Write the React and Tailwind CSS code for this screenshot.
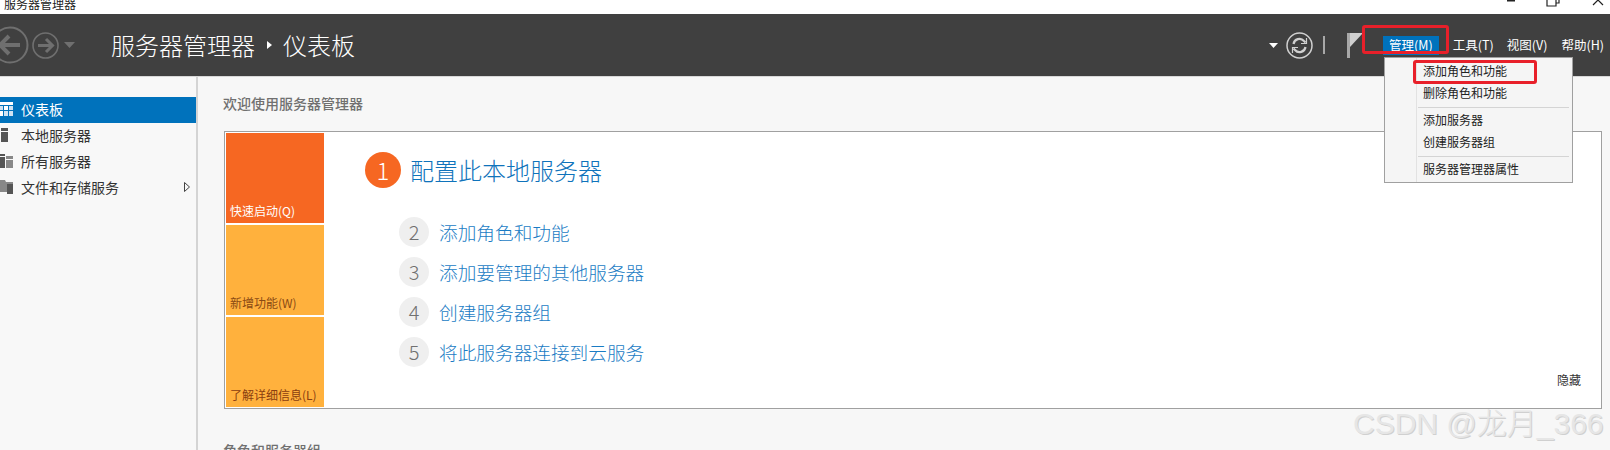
import React from "react";

const cjk = "font-['Noto_Sans_CJK_SC','Noto_Sans',sans-serif]";

const navItems = [
  { label: "仪表板", icon: "grid", active: true },
  { label: "本地服务器", icon: "server" },
  { label: "所有服务器", icon: "servers" },
  { label: "文件和存储服务", icon: "files", arrow: true },
];

const steps = [
  { n: 2, text: "添加角色和功能" },
  { n: 3, text: "添加要管理的其他服务器" },
  { n: 4, text: "创建服务器组" },
  { n: 5, text: "将此服务器连接到云服务" },
];

const NavIcon = ({ type }) => {
  if (type === "grid") {
    return (
      <svg width="13" height="14" viewBox="0 0 13 14">
        <rect x="0" y="0" width="13" height="3" fill="#fff" />
        <rect x="0" y="4" width="3" height="4" fill="#cfe3f3" />
        <rect x="4" y="4" width="4" height="4" fill="#fff" />
        <rect x="9" y="4" width="4" height="4" fill="#cfe3f3" />
        <rect x="0" y="9" width="3" height="5" fill="#fff" />
        <rect x="4" y="9" width="4" height="5" fill="#cfe3f3" />
        <rect x="9" y="9" width="4" height="5" fill="#cfe3f3" />
      </svg>
    );
  }
  if (type === "server") {
    return (
      <svg width="13" height="14" viewBox="0 0 13 14">
        <rect x="1" y="0" width="7" height="3" fill="#555" />
        <rect x="1" y="4" width="7" height="10" fill="#555" />
      </svg>
    );
  }
  if (type === "servers") {
    return (
      <svg width="13" height="14" viewBox="0 0 13 14">
        <rect x="0" y="0" width="5" height="2" fill="#555" />
        <rect x="0" y="3" width="5" height="11" fill="#555" />
        <rect x="6" y="2" width="7" height="3" fill="#888" />
        <rect x="6" y="6" width="7" height="8" fill="#888" />
      </svg>
    );
  }
  return (
    <svg width="13" height="14" viewBox="0 0 13 14">
      <path d="M0 0h5l1 2h7v4H7v6H0z" fill="#888" />
      <rect x="7" y="4" width="6" height="10" fill="#555" />
    </svg>
  );
};

const Tile = ({ label, className }) => (
  <div className={`w-[98px] flex items-end pl-[4px] pb-[3px] text-[12px] leading-[18px] ${className}`}>
    {label}
  </div>
);

const MenuItem = ({ children }) => (
  <div className="h-[22px] flex items-center pl-[38px] text-[12px] leading-[20px] pb-[2px] text-[#222]">{children}</div>
);

const MenuSep = () => <div className="ml-[33px] mr-[3px] my-[2px] h-[1px] bg-[#d4d4d4]" />;

export default function App() {
  return (
    <div className={`relative w-[1610px] h-[450px] overflow-hidden bg-[#f7f7f7] ${cjk}`}>
      {/* title bar */}
      <div className="h-[14px] bg-white overflow-hidden flex items-start">
        <span className="ml-[4px] -mt-[5px] text-[12px] leading-[18px] text-[#222]">服务器管理器</span>
        <svg className="ml-auto mr-[4px]" width="104" height="14" viewBox="0 0 104 14">
          <rect x="5" y="0" width="8" height="1.500" fill="#222" />
          <path d="M45 0v6h9V0M54 3h3V0" fill="none" stroke="#222" strokeWidth="1.200" />
          <path d="M91 5L96 0M96 0L101 5" fill="none" stroke="#222" strokeWidth="1.200" />
        </svg>
      </div>

      {/* header */}
      <div className="h-[62px] bg-[#404040] flex items-center border-b border-[#d8d8d8] box-content">
        <svg className="-ml-[9px] shrink-0" width="38" height="38" viewBox="0 0 38 38">
          <circle cx="19" cy="19" r="17.500" fill="none" stroke="#6f6f6f" strokeWidth="2" />
          <path d="M29 19H10M18 10l-9 9 9 9" fill="none" stroke="#6f6f6f" strokeWidth="4" />
        </svg>
        <svg className="ml-[3px] shrink-0" width="27" height="27" viewBox="0 0 27 27">
          <circle cx="13.500" cy="13.500" r="12.500" fill="none" stroke="#6f6f6f" strokeWidth="1.600" />
          <path d="M6 13.500h14M14 7l6.500 6.500L14 20" fill="none" stroke="#6f6f6f" strokeWidth="3" />
        </svg>
        <svg className="ml-[5px] shrink-0" width="11" height="6" viewBox="0 0 11 6">
          <path d="M0 0h11L5.500 6z" fill="#6f6f6f" />
        </svg>
        <div className="ml-[36px] flex items-center text-[24px] font-light text-white leading-none">
          <span>服务器管理器</span>
          <svg className="mx-[10px]" width="8" height="10" viewBox="0 0 8 10">
            <path d="M2 1l5 4-5 4z" fill="#fff" />
          </svg>
          <span>仪表板</span>
        </div>

        <div className="ml-auto flex items-center">
          <svg width="9" height="5" viewBox="0 0 9 5">
            <path d="M0 0h9L4.500 5z" fill="#fff" />
          </svg>
          <svg className="ml-[8px]" width="27" height="27" viewBox="0 0 27 27">
            <circle cx="13.500" cy="13.500" r="12.500" fill="none" stroke="#d0d0d0" strokeWidth="1.500" />
            <path d="M7.500 12a6 6 0 0 1 10.500-3l1.500 1.500M19.500 15a6 6 0 0 1-10.500 3l-1.500-1.500" fill="none" stroke="#d0d0d0" strokeWidth="2.200" />
            <path d="M20.500 6v5.500H15M6.500 21v-5.500H12" fill="none" stroke="#d0d0d0" strokeWidth="1.200" />
          </svg>
          <div className="ml-[10px] w-[2px] h-[18px] bg-[#a8a8a8]" />
          <svg className="ml-[22px]" width="16" height="25" viewBox="0 0 16 25">
            <rect x="0" y="0" width="3" height="25" fill="#a8a8a8" />
            <path d="M3 0h13L3 14z" fill="#cfcfcf" />
          </svg>
          <div className="ml-[20px] flex items-center text-[12.500px] text-white h-[19px]">
            <span className="w-[56px] h-[19px] bg-[#0072bc] flex items-center justify-center">管理(M)</span>
            <span className="ml-[14px]">工具(T)</span>
            <span className="ml-[13px]">视图(V)</span>
            <span className="ml-[14px] mr-[6px]">帮助(H)</span>
          </div>
        </div>
      </div>

      {/* body */}
      <div className="flex h-[373px]">
        <aside className="w-[198px] shrink-0 bg-[#f8f8f8] border-r-2 border-[#d4d4d4] pt-[20px]">
          {navItems.map((item) => (
            <div
              key={item.label}
              className={`h-[26px] flex items-center text-[14px] leading-[24px] pb-[2px] ${item.active ? "bg-[#0072bc] text-white" : "text-[#333]"}`}
            >
              <span className="w-[21px] flex shrink-0">
                <NavIcon type={item.icon} />
              </span>
              <span>{item.label}</span>
              {item.arrow && (
                <svg className="ml-auto mr-[6px]" width="6" height="10" viewBox="0 0 6 10">
                  <path d="M0.500 0.500L5.500 5L0.500 9.500z" fill="none" stroke="#444" />
                </svg>
              )}
            </div>
          ))}
        </aside>

        <main className="flex-1 pl-[26px] pr-[8px] pt-[16px]">
          <h2 className="-ml-[1px] h-[20px] text-[14px] leading-[20px] font-medium text-[#707070]">欢迎使用服务器管理器</h2>
          <div className="mt-[18px] h-[278px] bg-white border border-[#a0a0a0] p-[1px] flex relative">
            <div className="flex flex-col gap-[2px]">
              <Tile label="快速启动(Q)" className="h-[90px] bg-[#f66722] text-white" />
              <Tile label="新增功能(W)" className="h-[90px] bg-[#ffb13d] text-[#8a4a14]" />
              <Tile label="了解详细信息(L)" className="h-[90px] bg-[#ffb13d] text-[#8a3e10]" />
            </div>
            <div className="pl-[41px] pt-[19px]">
              <div className="flex items-center h-[36px]">
                <span className="w-[36px] h-[36px] rounded-full bg-[#f66722] text-white text-[24px] font-light flex items-center justify-center">1</span>
                <span className="ml-[9px] text-[24px] font-light text-[#0f73bb]">配置此本地服务器</span>
              </div>
              <div className="mt-[29px] ml-[34px] flex flex-col gap-[10px]">
                {steps.map((step) => (
                  <div key={step.n} className="flex items-center h-[30px]">
                    <span className="w-[30px] h-[30px] rounded-full bg-[#efefef] text-[#707070] text-[20px] font-light flex items-center justify-center">{step.n}</span>
                    <span className="ml-[10px] text-[18.670px] font-light text-[#1a7cc4]">{step.text}</span>
                  </div>
                ))}
              </div>
            </div>
            <span className="absolute right-[20px] bottom-[19px] text-[12px] text-[#333]">隐藏</span>
          </div>
          <h2 className="-ml-[1px] mt-[31px] text-[14px] leading-[20px] font-medium text-[#707070]">角色和服务器组</h2>
        </main>
      </div>

      {/* dropdown menu */}
      <div className="absolute left-[1384px] top-[57px] w-[189px] h-[126px] bg-[#f5f5f5] border border-[#a0a0a0] pt-[3px]">
        <div className="absolute left-[31px] top-0 bottom-0 w-[1px] bg-[#e2e2e2]" />
        <MenuItem>添加角色和功能</MenuItem>
        <MenuItem>删除角色和功能</MenuItem>
        <MenuSep />
        <MenuItem>添加服务器</MenuItem>
        <MenuItem>创建服务器组</MenuItem>
        <MenuSep />
        <MenuItem>服务器管理器属性</MenuItem>
      </div>

      {/* red annotation boxes */}
      <div className="absolute left-[1362px] top-[25px] w-[87px] h-[29px] border-[3px] border-[#e8202a] rounded-[3px]" />
      <div className="absolute left-[1413px] top-[60px] w-[124px] h-[24px] border-[3px] border-[#e8202a] rounded-[3px]" />

      {/* watermark */}
      <div className="absolute left-[1353px] top-[404px] text-[30px] font-light leading-[40px] whitespace-nowrap text-[#e6e6e6] [text-shadow:1px_1px_0px_#d0d0d0] font-['Liberation_Sans','Noto_Sans_CJK_SC',sans-serif]">
        CSDN @龙月_366
      </div>
    </div>
  );
}
